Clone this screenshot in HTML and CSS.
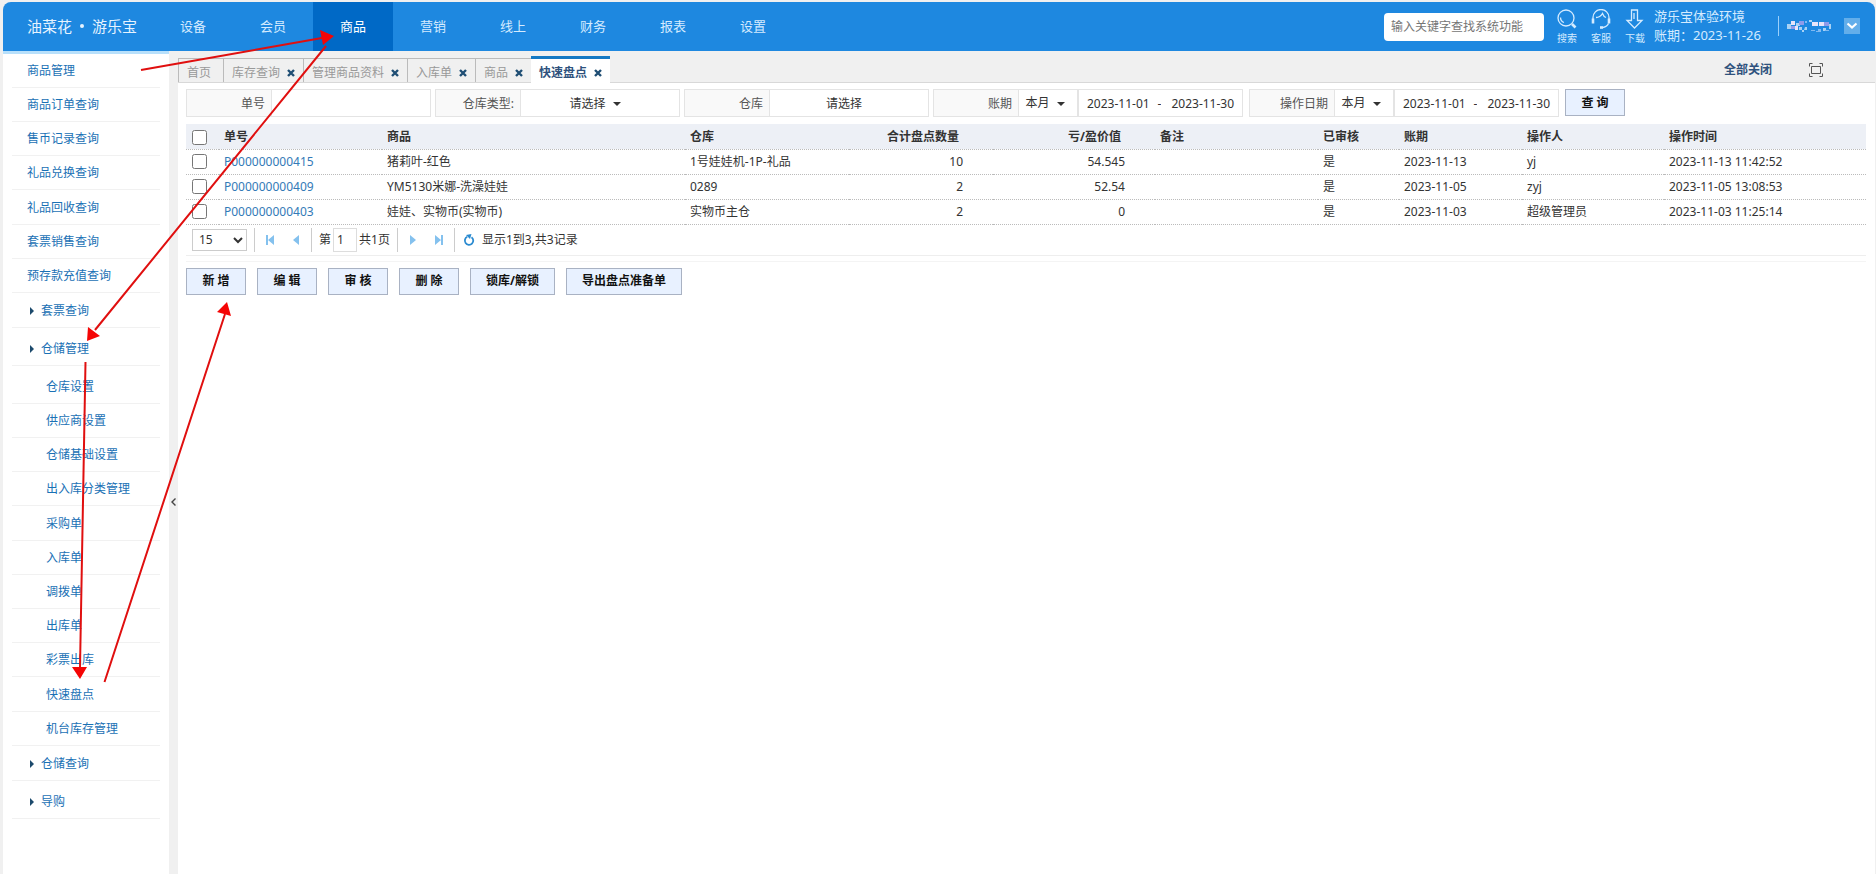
FILE: index.html
```html
<!DOCTYPE html>
<html lang="zh-CN">
<head>
<meta charset="utf-8">
<title>快速盘点</title>
<link rel="stylesheet" href="styles.css">
</head>
<body>
<div class="app">
  <header class="topbar">
    <div class="brand">油菜花<span class="brand-dot"></span>游乐宝</div>
    <nav class="mainnav">
      <a href="#">设备</a><a href="#">会员</a><a href="#" class="current">商品</a><a href="#">营销</a><a href="#">线上</a><a href="#">财务</a><a href="#">报表</a><a href="#">设置</a>
    </nav>
    <input class="search" type="text" aria-label="查找系统功能" placeholder="输入关键字查找系统功能">
    <div class="tools">
      <a href="#" class="tool"><svg width="20" height="20" viewBox="0 0 20 20"><circle cx="9" cy="9" r="8"/><path d="M3.500 8.500a5.500 5.500 0 0 0 3.500 5"/><path class="thick" d="M15 15l3.500 3.500"/></svg>搜索</a>
      <a href="#" class="tool"><svg width="20" height="20" viewBox="0 0 20 20"><path d="M2 10V8.500a8 8 0 0 1 16 0V10"/><path class="thick" d="M2 9.500v5M18 9.500v5"/><path d="M5 8.500c3 0 5-1.500 6.500-4 .8 2.200 2 3.500 3.500 4M17.500 14.500c-1 2.500-3 3.500-5.500 4"/><path class="thick" d="M9 18.500h3"/></svg>客服</a>
      <a href="#" class="tool"><svg width="20" height="20" viewBox="0 0 20 20"><path d="M6.500 1h6v10.500H17L9.500 19 2 11.500h4.500z"/><path d="M9 4v6"/></svg>下载</a>
    </div>
    <div class="account"><span>游乐宝体验环境</span><span>账期：2023-11-26</span></div>
    <div class="user">
      <svg class="mosaic" width="44" height="14" viewBox="0 0 44 14"><path fill="#a8d2f4" d="M0 5h4v5H0zM9 4h4v3H9zM12 8h3v3h-3zM18 8h2v3h-3v2h-2v-2h2zM22 1h3v2h-3zM36 9h3v3h-3zM42 5h2v5h-2z"/><path fill="#e6e4fa" d="M4 2h4v4H4zM8 7h3v4H8zM25 3h6v4h-6zM32 3h5v4h-5z"/><path fill="#8f9bea" d="M4 7h4v3H4zM12 2h5v4h-5zM37 3h5v4h-5z"/><path fill="#7fb9f2" d="M18 2h2v2h-2zM24 11h4v1h-4zM31 10h3v3h-5v-1h2zM38 11h4v1h-4z"/></svg>
      <button class="user-menu" aria-label="用户菜单"><svg width="16" height="16" viewBox="0 0 16 16"><path d="M3.500 5.500L8 9.500l4.500-4"/></svg></button>
    </div>
  </header>

  <div class="body">
    <aside class="sidebar">
      <ul class="menu">
        <li><a href="#">商品管理</a></li>
        <li><a href="#">商品订单查询</a></li>
        <li><a href="#">售币记录查询</a></li>
        <li><a href="#">礼品兑换查询</a></li>
        <li><a href="#">礼品回收查询</a></li>
        <li><a href="#">套票销售查询</a></li>
        <li><a href="#">预存款充值查询</a></li>
        <li class="group"><a href="#">套票查询</a></li>
        <li class="group spaced"><a href="#">仓储管理</a></li>
      </ul>
      <ul class="menu submenu">
        <li><a href="#">仓库设置</a></li>
        <li><a href="#">供应商设置</a></li>
        <li><a href="#">仓储基础设置</a></li>
        <li><a href="#">出入库分类管理</a></li>
        <li><a href="#">采购单</a></li>
        <li><a href="#">入库单</a></li>
        <li><a href="#">调拨单</a></li>
        <li><a href="#">出库单</a></li>
        <li><a href="#">彩票出库</a></li>
        <li><a href="#">快速盘点</a></li>
        <li><a href="#">机台库存管理</a></li>
      </ul>
      <ul class="menu">
        <li class="group"><a href="#">仓储查询</a></li>
        <li class="group spaced"><a href="#">导购</a></li>
      </ul>
    </aside>
    <button class="splitter" aria-label="收起菜单"><svg width="5" height="8" viewBox="0 0 5 8"><path d="M4.500 .5L1 4l3.500 3.500"/></svg></button>

    <main class="main">
      <div class="tabbar">
        <a href="#" class="tab home">首页</a>
        <a href="#" class="tab">库存查询<svg class="x" width="8" height="8" viewBox="0 0 8 8"><path d="M1 1l6 6M7 1L1 7"/></svg></a>
        <a href="#" class="tab">管理商品资料<svg class="x" width="8" height="8" viewBox="0 0 8 8"><path d="M1 1l6 6M7 1L1 7"/></svg></a>
        <a href="#" class="tab">入库单<svg class="x" width="8" height="8" viewBox="0 0 8 8"><path d="M1 1l6 6M7 1L1 7"/></svg></a>
        <a href="#" class="tab">商品<svg class="x" width="8" height="8" viewBox="0 0 8 8"><path d="M1 1l6 6M7 1L1 7"/></svg></a>
        <a href="#" class="tab active">快速盘点<svg class="x" width="8" height="8" viewBox="0 0 8 8"><path d="M1 1l6 6M7 1L1 7"/></svg></a>
        <div class="tab-actions">
          <a href="#">全部关闭</a>
          <button class="full" aria-label="全屏"><svg width="14" height="14" viewBox="0 0 14 14"><path d="M.5 3.500v-3h3M10.500.5h3v3M13.500 10.500v3h-3M3.500 13.500h-3v-3M2.500 3.500h9v7h-9z"/></svg></button>
        </div>
      </div>

      <div class="content">
        <form class="filters">
          <div class="field"><label for="f-no">单号</label><input id="f-no" type="text"></div>
          <div class="field"><label for="f-type">仓库类型:</label><button type="button" id="f-type" class="pick">请选择<i class="caret"></i></button></div>
          <div class="field"><label for="f-store">仓库</label><button type="button" id="f-store" class="pick">请选择</button></div>
          <div class="field dates"><label for="f-period">账期</label><button type="button" class="period">本月<i class="caret"></i></button><input id="f-period" type="text" value="2023-11-01"><span>-</span><input type="text" aria-label="账期止" value="2023-11-30"></div>
          <div class="field dates"><label for="f-date">操作日期</label><button type="button" class="period">本月<i class="caret"></i></button><input id="f-date" type="text" value="2023-11-01"><span>-</span><input type="text" aria-label="操作日期止" value="2023-11-30"></div>
          <button type="button" class="btn">查 询</button>
        </form>

        <table class="grid">
          <colgroup><col class="c-check"><col class="c-no"><col class="c-goods"><col class="c-store"><col class="c-qty"><col class="c-value"><col class="c-note"><col class="c-audit"><col class="c-period"><col class="c-user"><col></colgroup>
          <thead>
            <tr><th><input type="checkbox" aria-label="全选"></th><th>单号</th><th>商品</th><th>仓库</th><th class="num">合计盘点数量</th><th class="num">亏/盈价值</th><th>备注</th><th>已审核</th><th>账期</th><th>操作人</th><th>操作时间</th></tr>
          </thead>
          <tbody>
            <tr><td><input type="checkbox" aria-label="选择 P000000000415"></td><td><a href="#">P000000000415</a></td><td>猪莉叶-红色</td><td>1号娃娃机-1P-礼品</td><td class="num">10</td><td class="num">54.545</td><td></td><td>是</td><td>2023-11-13</td><td>yj</td><td>2023-11-13 11:42:52</td></tr>
            <tr><td><input type="checkbox" aria-label="选择 P000000000409"></td><td><a href="#">P000000000409</a></td><td>YM5130米娜-洗澡娃娃</td><td>0289</td><td class="num">2</td><td class="num">52.54</td><td></td><td>是</td><td>2023-11-05</td><td>zyj</td><td>2023-11-05 13:08:53</td></tr>
            <tr><td><input type="checkbox" aria-label="选择 P000000000403"></td><td><a href="#">P000000000403</a></td><td>娃娃、实物币(实物币)</td><td>实物币主仓</td><td class="num">2</td><td class="num">0</td><td></td><td>是</td><td>2023-11-03</td><td>超级管理员</td><td>2023-11-03 11:25:14</td></tr>
          </tbody>
        </table>

        <div class="pager">
          <select aria-label="每页条数"><option>15</option></select>
          <div class="pager-group">
            <button aria-label="第一页"><svg width="10" height="10" viewBox="0 0 10 10"><path d="M1 0h2v10H1zM9 0v10L3 5z"/></svg></button>
            <button aria-label="上一页"><svg width="10" height="10" viewBox="0 0 10 10"><path d="M8 0v10L2 5z"/></svg></button>
          </div>
          <div class="pager-group page">
            <label for="page">第</label><input id="page" type="text" value="1"><span>共1页</span>
          </div>
          <div class="pager-group">
            <button aria-label="下一页"><svg width="10" height="10" viewBox="0 0 10 10"><path d="M2 0v10l6-5z"/></svg></button>
            <button aria-label="最后一页"><svg width="10" height="10" viewBox="0 0 10 10"><path d="M7 0h2v10H7zM1 0v10l6-5z"/></svg></button>
          </div>
          <div class="pager-group status">
            <button aria-label="刷新"><svg class="refresh" width="12" height="12" viewBox="0 0 12 12"><path d="M8.500 3.200a4.200 4.200 0 1 1-4.200-.4"/><path class="tip" d="M3 1l5.500-1L7 5z"/></svg></button>
            <span>显示1到3,共3记录</span>
          </div>
        </div>

        <div class="actions">
          <button class="btn">新 增</button><button class="btn">编 辑</button><button class="btn">审 核</button><button class="btn">删 除</button><button class="btn wide">锁库/解锁</button><button class="btn wide">导出盘点准备单</button>
        </div>
      </div>
    </main>
  </div>

  <svg class="guide" width="360" height="700" viewBox="0 0 360 700" aria-hidden="true">
    <path class="line" d="M141 70L322 38M326 46L95 330M85.500 362L80 668M104.500 682L225 314"/>
    <path class="head" d="M320 30l14 6-11 9zM87 341l1-14 12 9zM72 667h15l-7 12zM217 312l14 4-4-14z"/>
  </svg>
</div>
</body>
</html>
```
FILE: styles.css
```css
* { box-sizing: border-box; }
html, body { height: 100%; }
body {
  margin: 0;
  background: #fff;
  color: #333;
  font: 12px/16px "Noto Sans", "Noto Sans CJK SC", sans-serif;
}
a { color: inherit; text-decoration: none; }
button, input, select { font: inherit; color: inherit; margin: 0; }
button { padding: 0; border: 0; background: none; cursor: pointer; }
svg { display: block; flex: none; }

.app {
  position: relative;
  display: flex;
  flex-direction: column;
  min-height: 100%;
  padding: 2px 1px 0 3px;
  background: #f0f0f0;
}

/* Top bar */
.topbar {
  display: flex;
  align-items: center;
  height: 49px;
  padding-right: 15px;
  border-radius: 8px 8px 0 0;
  background: #1e88e0;
  color: #d4ebff;
  font-size: 13px;
}
.brand {
  display: flex;
  align-items: center;
  width: 150px;
  padding: 0 0 2px 24px;
  font-size: 15px;
  color: #e6f3ff;
}
.brand-dot { width: 4px; height: 4px; margin: 0 8px; border-radius: 50%; background: #e6f3ff; }
.mainnav { display: flex; align-self: stretch; margin-right: auto; }
.mainnav a { display: flex; align-items: center; justify-content: center; width: 80px; padding-bottom: 2px; }
.mainnav .current { background: #0069c6; color: #fff; }
.search {
  width: 160px;
  height: 28px;
  padding: 0 7px;
  border: 0;
  border-radius: 4px;
  background: #fff;
  font-size: 12px;
}
.search::placeholder { color: #757575; opacity: 1; }
.tools { display: flex; gap: 14px; margin-left: 13px; }
.tool {
  display: flex;
  flex-direction: column;
  align-items: center;
  gap: 2px;
  width: 20px;
  font-size: 10px;
  line-height: 14px;
  white-space: nowrap;
}
.tool svg { fill: none; stroke: #d4ebff; stroke-width: 1.3; }
.tool .thick { stroke-width: 2.6; }
.account { display: flex; flex-direction: column; width: 124px; margin-left: 9px; padding-bottom: 2px; line-height: 19px; white-space: nowrap; }
.user { display: flex; align-items: center; height: 20px; margin-bottom: 2px; border-left: 1px solid #9bd0fb; }
.mosaic { margin: 0 13px 0 8px; }
.user-menu { background: #63aeea; }
.user-menu path { fill: none; stroke: #fff; stroke-width: 2.2; }

/* Sidebar */
.body { display: flex; flex: 1; }
.sidebar { width: 166px; padding: 0 9px; border-top: 3px solid #b8e0fb; background: #fff; }
.menu { margin: 0; padding: 0; list-style: none; color: #1a71b5; }
.menu li { border-bottom: 1px solid #f1f1f1; }
.menu li:nth-child(5n) { padding-top: 1px; }
.menu a { display: flex; align-items: center; height: 33px; padding-left: 15px; }
.menu .group a { gap: 7px; }
.menu .group { padding-top: 1px; }
.menu .spaced { padding-top: 4px; }
.menu .group a::before {
  content: "";
  margin-left: 3px;
  border: 4px solid transparent;
  border-left-color: #1c4a6c;
  border-right: 0;
}
.submenu { padding-top: 4px; }
.submenu a { padding-left: 34px; }
.splitter { display: flex; align-items: center; justify-content: center; width: 9px; padding: 78px 0 0 0; }
.splitter path { fill: none; stroke: #444; stroke-width: 1.4; }

/* Tabs */
.main { flex: 1; min-width: 0; background: #fff; }
.tabbar { display: flex; align-items: flex-end; height: 32px; border-bottom: 1px solid #d8d8d8; background: #f0f0f0; }
.tab {
  display: flex;
  align-items: center;
  gap: 7px;
  height: 24px;
  padding: 4px 8px 0;
  border-top: 1px solid #bbb;
  border-left: 1px solid #bbb;
  color: #999;
}
.tab.home { padding-right: 12px; }
.tab.active {
  height: 27px;
  margin-bottom: -1px;
  padding-top: 3px;
  border-top: 3px solid #1479c4;
  border-left: 0;
  background: #fff;
  color: #2f527d;
  font-weight: bold;
}
.x { fill: none; stroke: #1f4e74; stroke-width: 2.4; }
.tab-actions { display: flex; align-items: center; align-self: center; gap: 37px; margin: 6px 52px 0 auto; color: #2f527d; font-weight: bold; }
.full path { fill: none; stroke: #555; }

/* Filters */
.content { padding: 6px 9px 0 8px; }
.filters { display: flex; gap: 4px; }
.field { display: flex; width: 245px; height: 28px; border: 1px solid #e4e4e4; }
.field label {
  display: flex;
  align-items: center;
  justify-content: flex-end;
  width: 85px;
  padding: 2px 6px 0 0;
  border-right: 1px solid #e4e4e4;
  background: #f9f9f9;
  color: #555;
  white-space: nowrap;
}
.field input { flex: 1; min-width: 0; padding: 2px 0 0 8px; border: 0; background: #fff; }
.field span { padding-top: 6px; }
.field span + input { padding-left: 10px; }
.pick { flex: 1; padding: 1px 10px 0 0; }
.dates { width: 310px; margin-right: 2px; }
.period { width: 60px; padding-right: 6px; border-right: 2px solid #e4e4e4; }
.caret {
  display: inline-block;
  margin-left: 7px;
  border: 4px solid transparent;
  border-top-color: #333;
  border-bottom: 0;
  vertical-align: middle;
}
.btn {
  width: 60px;
  height: 27px;
  border: 1px solid #a9b2c3;
  background: #e8f1ff;
  color: #111;
  font-weight: bold;
  white-space: nowrap;
}
.btn.wide { width: auto; padding: 0 15px; }

/* Data grid */
.grid { width: 100%; margin-top: 7px; border-collapse: collapse; table-layout: fixed; }
.c-check { width: 33px; }
.c-no { width: 163px; }
.c-goods { width: 303px; }
.c-store { width: 164px; }
.c-qty { width: 144px; }
.c-value { width: 162px; }
.c-note { width: 163px; }
.c-audit { width: 81px; }
.c-period { width: 123px; }
.c-user { width: 142px; }
.grid th, .grid td { height: 25px; padding: 0 5px; border-bottom: 1px dotted #bbb; text-align: left; white-space: nowrap; }
.grid th { padding-top: 2px; background: #edf0f6; }
.grid td.num { padding-right: 30px; text-align: right; }
.grid th.num { padding-right: 34px; text-align: right; }
.grid td a { color: #337ab7; }
.grid input { display: block; width: 15px; height: 15px; margin: 0 1px; }

/* Pager */
.pager { display: flex; align-items: center; height: 31px; padding-left: 6px; border-bottom: 1px solid #eee; }
.pager select { width: 55px; height: 22px; margin-right: 7px; padding: 0 2px; border: 1px solid #ccc; background: #fff; }
.pager-group { display: flex; align-items: center; gap: 16px; height: 24px; padding: 0 10px; border-left: 1px solid #ccc; }
.pager-group svg { fill: #84c1ee; }
.page { gap: 2px; padding: 0 7px; }
.page input { width: 24px; height: 24px; padding: 0 3px; border: 1px solid #ddd; }
.status { gap: 7px; padding-left: 8px; }
.status .refresh { fill: none; stroke: #2a8ad0; stroke-width: 1.8; }
.refresh .tip { fill: #2a8ad0; stroke: none; }

.actions { display: flex; gap: 11px; margin-top: 5px; padding-top: 6px; border-top: 1px solid #f4f4f4; }

/* Walkthrough arrows over the page */
.guide { position: absolute; top: 0; left: 0; pointer-events: none; }
.guide .line { fill: none; stroke: #e00f0f; stroke-width: 2; }
.guide .head { fill: #f50505; }
```
